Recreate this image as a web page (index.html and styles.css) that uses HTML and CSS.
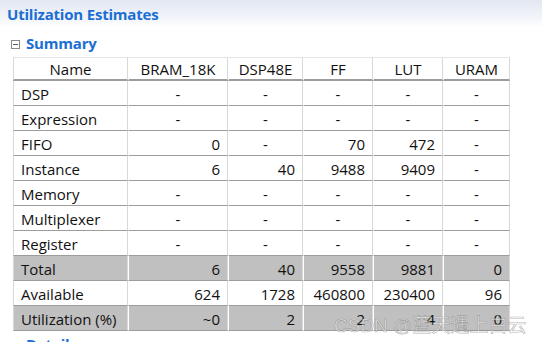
FILE: index.html
```html
<!DOCTYPE html>
<html>
<head>
<meta charset="utf-8">
<link rel="stylesheet" href="styles.css">
</head>
<body>
<div class="page">
  <div class="titlebar"><h1 class="title">Utilization Estimates</h1></div>
  <div class="section">
    <div class="sechead"><span class="toggle"></span><h2 class="sectitle">Summary</h2></div>
    <table class="util">
      <thead>
        <tr><th class="c-name">Name</th><th class="c-bram">BRAM_18K</th><th class="c-dsp">DSP48E</th><th class="c-ff">FF</th><th class="c-lut">LUT</th><th class="c-uram">URAM</th></tr>
      </thead>
      <tbody>
        <tr><td>DSP</td><td class="d">-</td><td class="d">-</td><td class="d">-</td><td class="d">-</td><td class="d">-</td></tr>
        <tr><td>Expression</td><td class="d">-</td><td class="d">-</td><td class="d">-</td><td class="d">-</td><td class="d">-</td></tr>
        <tr><td>FIFO</td><td class="n">0</td><td class="d">-</td><td class="n">70</td><td class="n">472</td><td class="d">-</td></tr>
        <tr><td>Instance</td><td class="n">6</td><td class="n">40</td><td class="n">9488</td><td class="n">9409</td><td class="d">-</td></tr>
        <tr><td>Memory</td><td class="d">-</td><td class="d">-</td><td class="d">-</td><td class="d">-</td><td class="d">-</td></tr>
        <tr><td>Multiplexer</td><td class="d">-</td><td class="d">-</td><td class="d">-</td><td class="d">-</td><td class="d">-</td></tr>
        <tr><td>Register</td><td class="d">-</td><td class="d">-</td><td class="d">-</td><td class="d">-</td><td class="d">-</td></tr>
        <tr class="gray"><td>Total</td><td class="n">6</td><td class="n">40</td><td class="n">9558</td><td class="n">9881</td><td class="n">0</td></tr>
        <tr><td>Available</td><td class="n">624</td><td class="n">1728</td><td class="n">460800</td><td class="n">230400</td><td class="n">96</td></tr>
        <tr class="gray"><td>Utilization (%)</td><td class="n">~0</td><td class="n">2</td><td class="n">2</td><td class="n">4</td><td class="n">0</td></tr>
      </tbody>
    </table>
    <div class="sechead next"><span class="toggle"></span><h2 class="sectitle">Detail</h2></div>
  </div>
  <div class="watermark">CSDN @蓝天遇上白云</div>
</div>
</body>
</html>
```
FILE: styles.css
```css
html, body {
  margin: 0;
  padding: 0;
  background: #fff;
  overflow: hidden;
}
.page {
  position: relative;
  width: 542px;
  height: 342px;
  overflow: hidden;
  font-family: "Open Sans", "Noto Sans", sans-serif;
  color: #111;
}
.titlebar {
  height: 27px;
  background: linear-gradient(to bottom, #e2e7f1 0%, #f3f5fa 70%, #ffffff 100%);
  padding-left: 7px;
  display: flex;
  align-items: center;
}
.title {
  margin: 0;
  font-size: 15px;
  font-weight: 700;
  color: #1b6ed3;
  letter-spacing: -0.2px;
}
.section {
  padding-left: 13px;
}
.sechead {
  height: 30px;
  display: flex;
  align-items: center;
  gap: 6px;
  margin-left: -2px;
  padding-top: 1px;
  box-sizing: border-box;
}
.sechead.next {
  height: 23px;
  padding-top: 0;
  align-items: flex-end;
}
.toggle {
  width: 7px;
  height: 7px;
  border: 1px solid #8a8a8a;
  position: relative;
  margin-top: 3px;
}
.toggle::after {
  content: "";
  position: absolute;
  left: 1px;
  right: 1px;
  top: 3px;
  height: 1px;
  background: #555;
}
.sectitle {
  margin: 0;
  font-size: 15px;
  font-weight: 700;
  color: #1b6ed3;
  letter-spacing: -0.2px;
}
.util {
  border-collapse: separate;
  border-spacing: 0;
  font-size: 15px;
  table-layout: fixed;
  width: 497px;
}
.util th, .util td {
  box-sizing: border-box;
  border-left: 1px solid #fff;
  border-right: 1px solid #d8d8d8;
  border-bottom: 1px solid #9c9c9c;
  padding: 1px 7px 0;
  white-space: nowrap;
  line-height: 20px;
}
.util tr > :first-child {
  border-left: 1px solid #d8d8d8;
}
.util th {
  font-weight: 400;
  height: 24px;
  border-top: 1px solid #e4e4e4;
  border-bottom: 2px solid #9c9c9c;
  text-align: center;
}
.util td {
  height: 25px;
  text-align: left;
}
.util td.d { text-align: center; }
.util td.n { text-align: right; }
.util tr.gray td { background: #c0c0c0; }
.c-name { width: 115px; }
.c-bram { width: 100px; }
.c-dsp { width: 75px; }
.c-ff { width: 70px; }
.c-lut { width: 70px; }
.c-uram { width: 67px; }
.watermark {
  position: absolute;
  left: 334px;
  top: 310px;
  font-family: "Liberation Sans", "Noto Sans CJK SC", sans-serif;
  font-size: 19px;
  color: rgba(255, 255, 255, 0.55);
  -webkit-text-stroke: 0.6px rgba(110, 110, 110, 0.55);
  white-space: nowrap;
}
```
